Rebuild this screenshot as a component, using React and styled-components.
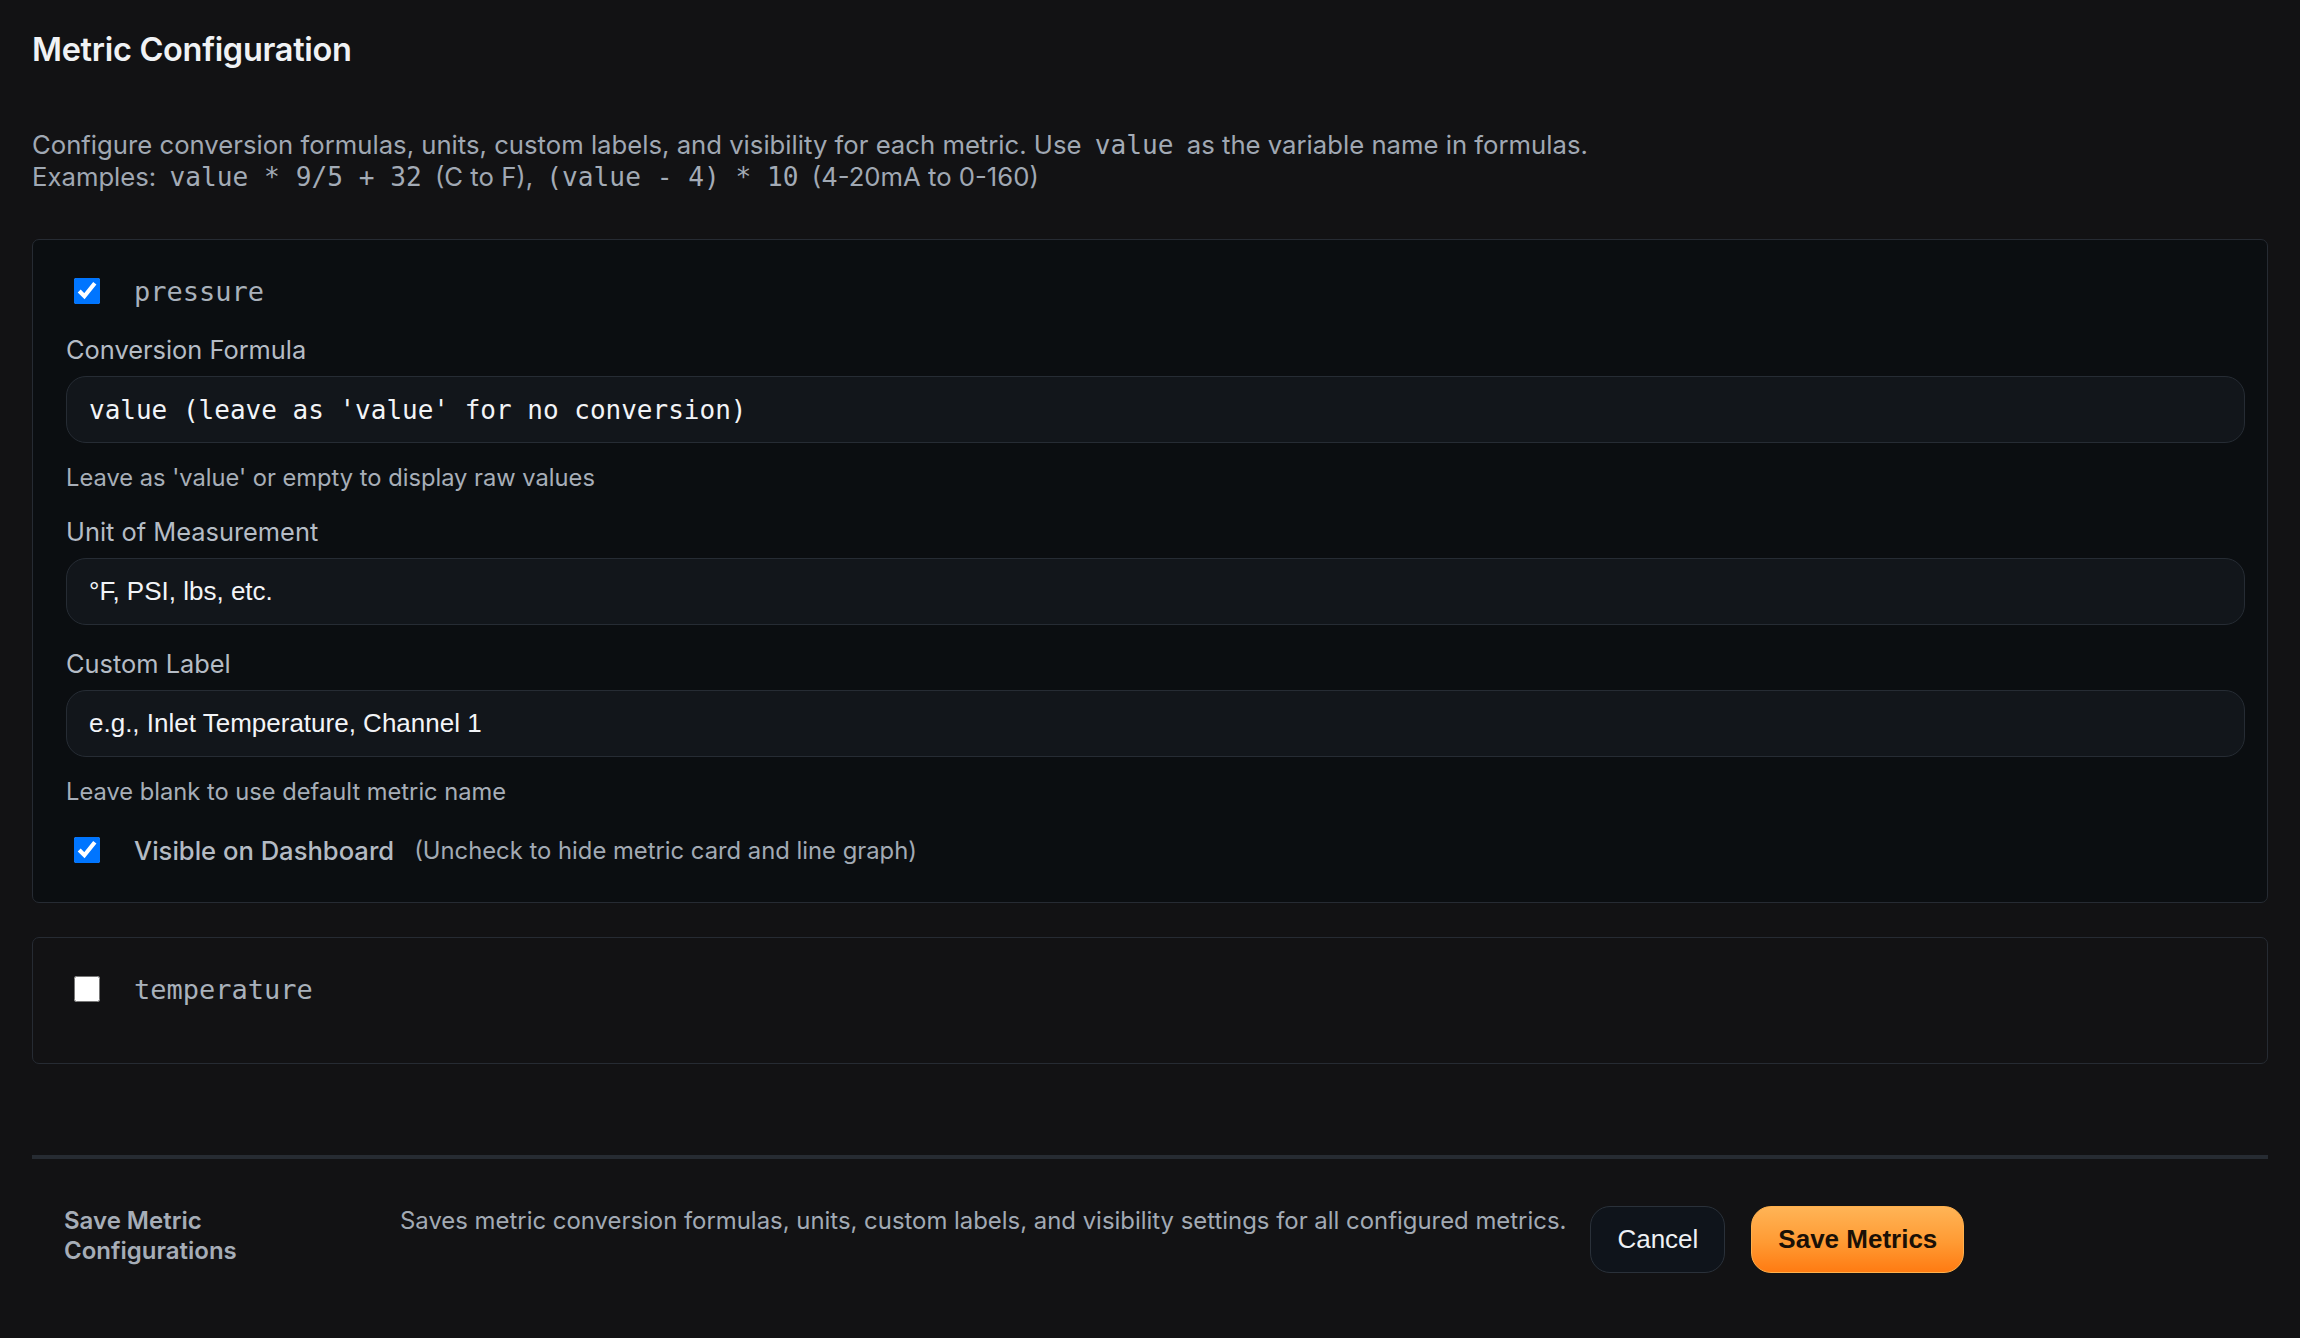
import React from "react";
import styled, { createGlobalStyle } from "styled-components";

const GlobalStyle = createGlobalStyle`
  html, body {
    margin: 0;
    padding: 0;
    background: #121214;
  }
  body {
    font-family: Inter, "Noto Sans", sans-serif;
    -webkit-font-smoothing: antialiased;
  }
  * { box-sizing: border-box; }
`;

const Page = styled.div`
  min-height: 1338px;
  padding: 30px 32px 60px;
  background: #121214;
`;

const Title = styled.h2`
  margin: 0;
  font-size: 32.5px;
  line-height: 40px;
  font-weight: 600;
  color: #f0f2f5;
  letter-spacing: -0.3px;
`;

const Intro = styled.p`
  margin: 59px 0 46px;
  font-size: 25.7px;
  line-height: 32px;
  color: #a0a8b3;
`;

const Code = styled.code`
  font-family: "DejaVu Sans Mono", "Liberation Mono", monospace;
  font-size: 26.2px;
  padding: 0 6px;
  color: #a3abb6;
`;

const List = styled.div`
  display: flex;
  flex-direction: column;
  gap: 34px;
`;

const Card = styled.section`
  border: 1px solid #262b33;
  border-radius: 7px;
  background: ${(p) => (p.$open ? "#0b0e11" : "#121214")};
  padding: 38px 22px ${(p) => (p.$open ? "39px" : "61px")} 33px;
  display: flex;
  flex-direction: column;
`;

const CheckRow = styled.label`
  display: flex;
  align-items: center;
  gap: 34px;
  padding-left: 8px;
  height: 26px;
  margin-top: ${(p) => p.$top || 0}px;
`;

const Check = styled.input.attrs({ type: "checkbox" })`
  width: 26px;
  height: 26px;
  margin: 0;
  flex: none;
`;

const MetricName = styled.span`
  font-family: "DejaVu Sans Mono", "Liberation Mono", monospace;
  font-size: 27px;
  color: #a9b1bb;
`;

const Fields = styled.div`
  display: flex;
  flex-direction: column;
  gap: 24px;
  margin-top: 31px;
`;

const Field = styled.div`
  display: flex;
  flex-direction: column;
  gap: 11px;
`;

const FieldLabel = styled.div`
  font-size: 25.4px;
  line-height: 30px;
  color: #b5bcc5;
`;

const TextInput = styled.input`
  height: 67px;
  width: 100%;
  padding: 0 22px;
  border: 1px solid #262c34;
  border-radius: 20px;
  background: #12161b;
  color: #f2f4f7;
  font-family: ${(p) =>
    p.$mono
      ? `"DejaVu Sans Mono", "Liberation Mono", monospace`
      : `"Liberation Sans", Arial, sans-serif`};
  font-size: 26px;
  outline: none;
  &::placeholder {
    color: #f2f4f7;
    opacity: 1;
  }
`;

const Hint = styled.div`
  margin-top: 9px;
  font-size: 23.7px;
  line-height: 30px;
  color: #a7aeb8;
`;

const VisibleText = styled.span`
  font-size: 25.6px;
  font-weight: 500;
  color: #b4bbc4;
`;

const VisibleNote = styled.span`
  font-size: 23.8px;
  color: #a2aab4;
  margin-left: -14px;
`;

const Divider = styled.hr`
  margin: 91px 0 47px;
  border: none;
  height: 4px;
  background: #262b32;
`;

const Footer = styled.div`
  display: flex;
  align-items: flex-start;
  padding-left: 32px;
`;

const FooterTitle = styled.div`
  flex: 0 0 280px;
  margin-right: 56px;
  font-size: 24px;
  line-height: 30px;
  font-weight: 600;
  color: #a6adb7;
`;

const FooterText = styled.div`
  font-size: 23.9px;
  line-height: 30px;
  color: #a2aab4;
`;

const Buttons = styled.div`
  display: flex;
  gap: 26px;
  margin-left: 24px;
  flex: none;
`;

const Button = styled.button`
  height: 67px;
  padding: 0 26px;
  border-radius: 20px;
  font-family: "Liberation Sans", Arial, sans-serif;
  font-size: 26px;
  cursor: pointer;
  ${(p) =>
    p.$primary
      ? `
    background: linear-gradient(180deg, #ffb456 0%, #ff9a33 55%, #ff7b12 100%);
    border: 1px solid #ffb04c;
    color: #1a1006;
    font-weight: 700;
  `
      : `
    background: #0f141b;
    border: 1px solid #2a313a;
    color: #eef1f4;
    font-weight: 400;
  `}
`;

const metrics = [
  { key: "pressure", enabled: true },
  { key: "temperature", enabled: false },
];

function MetricCard({ metric }) {
  return (
    <Card $open={metric.enabled}>
      <CheckRow>
        <Check defaultChecked={metric.enabled} />
        <MetricName>{metric.key}</MetricName>
      </CheckRow>
      {metric.enabled && (
        <>
          <Fields>
            <Field>
              <FieldLabel>Conversion Formula</FieldLabel>
              <TextInput $mono placeholder="value (leave as 'value' for no conversion)" />
              <Hint>Leave as 'value' or empty to display raw values</Hint>
            </Field>
            <Field>
              <FieldLabel>Unit of Measurement</FieldLabel>
              <TextInput placeholder="°F, PSI, lbs, etc." />
            </Field>
            <Field>
              <FieldLabel>Custom Label</FieldLabel>
              <TextInput placeholder="e.g., Inlet Temperature, Channel 1" />
              <Hint>Leave blank to use default metric name</Hint>
            </Field>
          </Fields>
          <CheckRow $top={30}>
            <Check defaultChecked />
            <VisibleText>Visible on Dashboard</VisibleText>
            <VisibleNote>(Uncheck to hide metric card and line graph)</VisibleNote>
          </CheckRow>
        </>
      )}
    </Card>
  );
}

export default function App() {
  return (
    <>
      <GlobalStyle />
      <Page>
        <Title>Metric Configuration</Title>
        <Intro>
          Configure conversion formulas, units, custom labels, and visibility for each metric. Use{" "}
          <Code>value</Code> as the variable name in formulas.
          <br />
          Examples: <Code>value * 9/5 + 32</Code> (C to F), <Code>(value - 4) * 10</Code> (4-20mA to 0-160)
        </Intro>
        <List>
          {metrics.map((m) => (
            <MetricCard key={m.key} metric={m} />
          ))}
        </List>
        <Divider />
        <Footer>
          <FooterTitle>Save Metric Configurations</FooterTitle>
          <FooterText>
            Saves metric conversion formulas, units, custom labels, and visibility settings for all configured metrics.
          </FooterText>
          <Buttons>
            <Button>Cancel</Button>
            <Button $primary>Save Metrics</Button>
          </Buttons>
        </Footer>
      </Page>
    </>
  );
}
